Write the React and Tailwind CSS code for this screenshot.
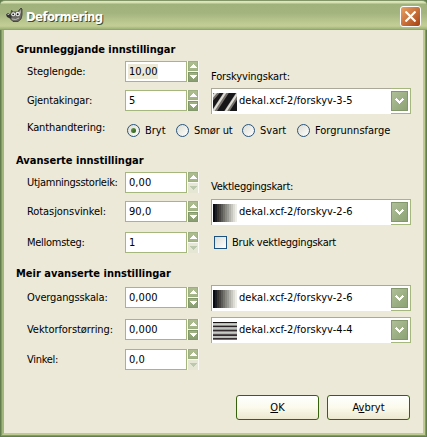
import React from 'react';

function Arrow({ up, off }) {
  return (
    <div className={`flex h-[10px] w-[10px] items-center justify-center ${off ? 'bg-[#e6e6d4]' : up ? 'border border-[#9caf80] bg-linear-to-b from-[#adbd90] to-[#a3b487]' : 'border border-[#82976a] bg-linear-to-b from-[#a0b283] to-[#879c70]'}`}>
      <svg className="h-[4px] w-[7px] shrink-0" viewBox="0 0 7 4" shapeRendering="crispEdges">
        <path d={up ? 'M3 0h1v1h1v1h1v1h1v1H0V3h1V2h1V1h1z' : 'M0 0h7v1H6v1H5v1H4v1H3V3H2V2H1V1H0z'} fill={off ? '#bcc8ad' : '#fff'} />
      </svg>
    </div>
  );
}

function Spin({ label, value, ls = '', selected, noDown }) {
  return (
    <div className="flex h-[21px] items-center">
      <div className={`ml-[23px] w-[98px] shrink-0 pt-[2px] whitespace-nowrap ${ls}`}>{label}</div>
      <div className="flex h-[21px] w-[62px] shrink-0 items-center border border-[#a5b77c] bg-white pl-[2px]">
        <span className={`flex h-[15px] items-center pt-px pl-px leading-[14px] tracking-[0.05px] ${selected ? 'bg-[#ece9d8]' : ''}`}>{value}</span>
      </div>
      <div className="flex h-[21px] w-[12px] shrink-0 flex-col items-center justify-between bg-[#fbfaf4]">
        <Arrow up />
        <Arrow off={noDown} />
      </div>
    </div>
  );
}

function Diagonal() {
  return (
    <svg className="ml-px h-[18px] w-[24px] shrink-0" viewBox="0 0 24 18">
      <rect width="24" height="18" fill="#171719" />
      <path d="M-4 9L7-4M0 20L15-3M12 21L27-2" stroke="#77736f" strokeWidth="4.6" />
      <path d="M-5 9L6-4M-1 20L14-3M11 21L26-2" stroke="#deddd5" strokeWidth="2.1" />
    </svg>
  );
}

function Ramp() {
  const shades = ['#090b12', '#1c1e22', '#37332f', '#454442', '#5c5c59', '#73736c', '#898983', '#9b9b96', '#b2b2aa', '#c7c7bf', '#dcdcd5', '#eeeee9'];
  return (
    <svg className="ml-px h-[18px] w-[24px] shrink-0" viewBox="0 0 24 18" shapeRendering="crispEdges">
      {shades.map((c, i) => <rect key={c} x={i * 2} width="2" height="18" fill={c} />)}
    </svg>
  );
}

function Stripes() {
  const rows = ['#171313', '#b7bcb8', '#cbd0c8', '#8b8b8b', '#292125', '#b2aead', '#bcc3bc', '#939693', '#352a2e', '#8e8989', '#c5cbc4', '#b1b4b0', '#554a4f', '#352c30', '#c0c5bf', '#b7bdb7', '#383033', '#746d70'];
  return (
    <svg className="ml-px h-[18px] w-[24px] shrink-0" viewBox="0 0 24 18" shapeRendering="crispEdges">
      {rows.map((c, i) => <rect key={i} y={i} width="24" height="1" fill={c} />)}
    </svg>
  );
}

function Combo({ children, text }) {
  return (
    <div className="flex h-[26px] w-[200px] shrink-0 bg-white">
      <div className="flex w-[180px] items-center border-t border-l border-[#aca899]">
        {children}
        <span className="ml-[2px] tracking-[0.06px] whitespace-nowrap">{text}</span>
      </div>
      <div className="flex flex-1 items-center border-t border-r border-b border-[#a5b77c]">
        <div className="flex h-[20px] w-[17px] items-center justify-center border border-[#82976a] bg-linear-to-br from-[#afbf98] to-[#8ca274]">
          <svg className="h-[7px] w-[9px] shrink-0" viewBox="0 0 9 7" shapeRendering="crispEdges">
            <path d="M0 1h1V0h1v1h1v1h1v1h1V2h1V1h1V0h1v1h1v1H8v1H7v1H6v1H5v1H4V5H3V4H2V3H1V2H0z" fill="#fff" />
          </svg>
        </div>
      </div>
    </div>
  );
}

function Radio({ label, on, width, ls = '' }) {
  return (
    <div className={`flex shrink-0 items-center ${width}`}>
      <div className="flex h-[13px] w-[13px] shrink-0 items-center justify-center rounded-full border border-[#245580] bg-linear-to-br from-[#dddcd3] to-white">
        {on && <div className="h-[5px] w-[5px] rounded-full bg-linear-to-br from-[#6ba052] to-[#285512]" />}
      </div>
      <span className={`ml-[5px] pt-[2px] whitespace-nowrap ${ls}`}>{label}</span>
    </div>
  );
}

function Heading({ children, ls = '' }) {
  return <h2 className={`h-[18px] pt-px pl-[12px] font-bold leading-[18px] whitespace-nowrap ${ls}`}>{children}</h2>;
}

function Button({ children }) {
  return (
    <button className="h-[25px] w-[83px] rounded-[3px] border border-[#37620d] bg-linear-to-b from-white via-[#fbfaec] to-[#ece8cf] pt-px text-center leading-[22px]">
      {children}
    </button>
  );
}

function Mascot() {
  return (
    <svg className="ml-px h-[16px] w-[17px] shrink-0" viewBox="0 0 17 16">
      <path d="M5 6L5.500 3.500 7.500 5h4L15 1l1 1v6l-1 4-3 2.500H7L4.500 12 4 9z" fill="#6d6b65" stroke="#34362f" strokeWidth=".8" />
      <path d="M13 5l2-2.500V7z" fill="#aaa8a0" />
      <circle cx="7.300" cy="7.200" r="2" fill="#eee" />
      <circle cx="11.800" cy="7" r="2.300" fill="#eee" />
      <circle cx="7.200" cy="7.300" r=".9" fill="#151515" />
      <circle cx="11.700" cy="7.200" r="1" fill="#151515" />
      <path d="M0 7.500L2 6l2.500 2L6 10l-2 1.500L1 10z" fill="#343532" />
      <path d="M1.500 7.500h1.500" stroke="#ddd" strokeWidth=".8" />
      <path d="M6 12q4 1.500 7-1" stroke="#bbb9b2" fill="none" />
    </svg>
  );
}

export default function App() {
  return (
    <div className="flex h-[437px] w-[427px] flex-col overflow-hidden bg-[#637d4f] font-['DejaVu_Sans_Condensed','DejaVu_Sans',sans-serif] text-[11px] text-black [font-stretch:condensed]">
      <header className="flex h-[30px] shrink-0 items-center rounded-t-[5px] border-t border-b border-t-[#819567] border-b-[#8fa66e] bg-[linear-gradient(#e1e8bd_0px,#d2dcab_2px,#a0b27c_3px,#a4b47f_12px,#bdca91_22px,#c2cd94_25px,#9eb477_28px)] px-px">
        <div className="mx-[4px] flex w-full items-center">
          <Mascot />
          <h1 className="ml-[3px] pt-[4px] text-[13px] leading-[20px] font-bold tracking-[-0.6px] text-white [text-shadow:1px_1px_0_#40502b]">Deformering</h1>
          <button className="mt-[3px] mr-[1px] ml-auto flex h-[21px] w-[21px] items-center justify-center rounded-[3px] border border-white bg-linear-to-br from-[#e9a263] via-[#c9723b] to-[#a6400f]">
            <svg className="h-[11px] w-[11px]" viewBox="0 0 11 11">
              <path d="M.5.5l10 10M10.500.5l-10 10" stroke="#fff" strokeWidth="2.200" />
            </svg>
          </button>
        </div>
      </header>

      <div className="flex min-h-0 flex-1 border-r border-b border-l border-[#637d4f]">
        <div className="flex flex-1 border-r border-b border-l border-[#829968]">
          <div className="flex flex-1 border-r-2 border-b-2 border-l-2 border-r-[#bdcb91] border-b-[#bdcb91] border-l-[#a2b77b]">
            <main className="flex flex-1 flex-col bg-[#ece9d8]">
              <section className="h-[115px] pt-[10px]">
                <Heading ls="tracking-[-0.03px]">Grunnleggjande innstillingar</Heading>
                <div className="flex h-[56px]">
                  <div className="flex w-[207px] flex-col gap-[8px] pt-[3px]">
                    <Spin label="Steglengde:" value="10,00" selected ls="tracking-[-0.1px]" />
                    <Spin label="Gjentakingar:" value="5" ls="tracking-[-0.15px]" />
                  </div>
                  <div className="flex flex-col pt-[11px]">
                    <div className="mb-[4px] h-[15px] leading-[15px] tracking-[-0.13px]">Forskyvingskart:</div>
                    <Combo text="dekal.xcf-2/forskyv-3-5"><Diagonal /></Combo>
                  </div>
                </div>
                <div className="flex h-[31px] items-center">
                  <div className="mb-[2px] ml-[23px] w-[100px] tracking-[-0.13px]">Kanthandtering:</div>
                  <div className="flex items-center pt-px">
                    <Radio label="Bryt" on width="w-[49px]" />
                    <Radio label="Smør ut" width="w-[66px]" ls="tracking-[-0.1px]" />
                    <Radio label="Svart" width="w-[55px]" />
                    <Radio label="Forgrunnsfarge" width="w-[100px]" />
                  </div>
                </div>
              </section>

              <section className="h-[115px] pt-[6px]">
                <Heading ls="tracking-[0.02px]">Avanserte innstillingar</Heading>
                <div className="flex">
                  <div className="flex w-[207px] flex-col pt-[3px]">
                    <Spin label="Utjamningsstorleik:" value="0,00" noDown ls="tracking-[-0.29px]" />
                    <div className="h-[8px]" />
                    <Spin label="Rotasjonsvinkel:" value="90,0" ls="tracking-[-0.07px]" />
                    <div className="h-[10px]" />
                    <Spin label="Mellomsteg:" value="1" noDown ls="tracking-[-0.27px]" />
                  </div>
                  <div className="flex flex-col pt-[10px]">
                    <div className="mb-[5px] h-[15px] leading-[15px] tracking-[-0.25px]">Vektleggingskart:</div>
                    <Combo text="dekal.xcf-2/forskyv-2-6"><Ramp /></Combo>
                    <label className="mt-[10px] flex h-[15px] items-center pl-[3px]">
                      <span className="h-[13px] w-[13px] border border-[#1c5180] bg-linear-to-br from-[#dcdcd7] to-white" />
                      <span className="ml-[5px] pt-[2px] tracking-[-0.24px] whitespace-nowrap">Bruk vektleggingskart</span>
                    </label>
                  </div>
                </div>
              </section>

              <section className="h-[135px] pt-[4px]">
                <Heading>Meir avanserte innstillingar</Heading>
                <div className="flex">
                  <div className="flex w-[207px] flex-col pt-[5px]">
                    <Spin label="Overgangsskala:" value="0,000" ls="tracking-[-0.13px]" />
                    <div className="h-[11px]" />
                    <Spin label="Vektorforstørring:" value="0,000" ls="tracking-[-0.05px]" />
                    <div className="h-[9px]" />
                    <Spin label="Vinkel:" value="0,0" noDown ls="tracking-[-0.28px]" />
                  </div>
                  <div className="flex flex-col gap-[6px] pt-[3px]">
                    <Combo text="dekal.xcf-2/forskyv-2-6"><Ramp /></Combo>
                    <Combo text="dekal.xcf-2/forskyv-4-4"><Stripes /></Combo>
                  </div>
                </div>
              </section>

              <footer className="flex justify-end gap-[8px] pr-[13px]">
                <Button><span className="underline">O</span>K</Button>
                <Button>A<span className="underline">v</span>bryt</Button>
              </footer>
            </main>
          </div>
        </div>
      </div>
    </div>
  );
}
